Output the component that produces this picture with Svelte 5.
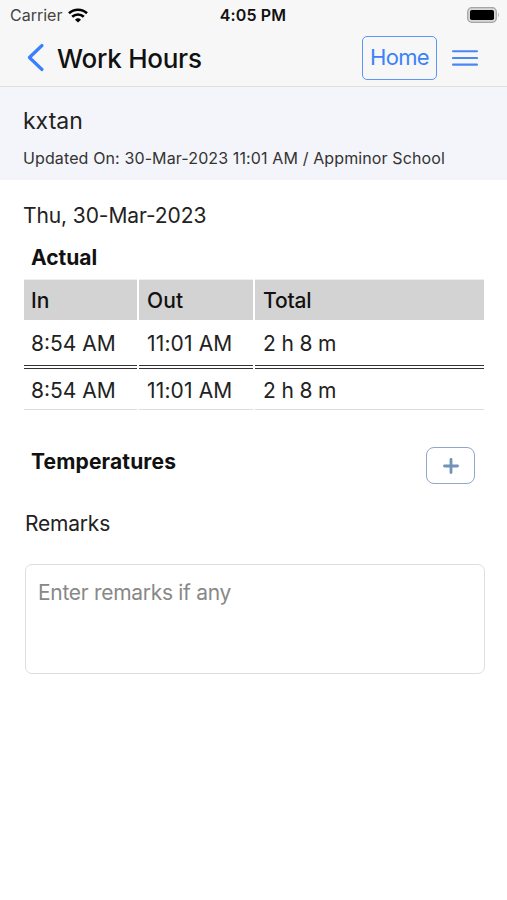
<script lang="ts">
    type Entry = { in: string; out: string; total: string };

    const staff = { name: 'kxtan', updated: '30-Mar-2023 11:01 AM', school: 'Appminor School' };
    const day = 'Thu, 30-Mar-2023';
    const entries: Entry[] = [{ in: '8:54 AM', out: '11:01 AM', total: '2 h 8 m' }];
    const sum: Entry = { in: '8:54 AM', out: '11:01 AM', total: '2 h 8 m' };

    let remarks = $state('');
</script>

<div class="page">
    <header>
        <div class="status">
            <div class="carrier">
                <span>Carrier</span>
                <svg width="20" height="15" viewBox="0 0 20 15" fill="none" stroke="#000" stroke-width="2.6">
                    <path d="M1 5.3a13 13 0 0 1 18 0" />
                    <path d="M4.2 8.8a8.4 8.4 0 0 1 11.6 0" />
                    <path d="M10 14.6 7 11.7a4.3 4.3 0 0 1 6 0z" fill="#000" stroke="none" />
                </svg>
            </div>
            <span class="time">4:05 PM</span>
            <svg class="battery" width="33" height="16" viewBox="0 0 33 16">
                <rect x=".7" y=".7" width="28.6" height="14.6" rx="4" fill="#d8d8d8" stroke="#a5a5a5" stroke-width="1.3" />
                <rect x="3" y="3" width="24" height="10" rx="1.8" fill="#000" />
                <path d="M31 5.5q1.8 2.5 0 5z" fill="#a5a5a5" />
            </svg>
        </div>
        <nav>
            <button class="icon" aria-label="Back">
                <svg width="18" height="30" viewBox="0 0 18 30" fill="none" stroke="#3880ff" stroke-width="3.2" stroke-linecap="round" stroke-linejoin="round">
                    <path d="M15 2.5 2.4 14.5 15 26.5" />
                </svg>
            </button>
            <h1>Work Hours</h1>
            <button class="home">Home</button>
            <button class="icon" aria-label="Menu">
                <svg width="26" height="18" viewBox="0 0 26 18" stroke="#4a88f5" stroke-width="2.1" stroke-linecap="round">
                    <path d="M1 2.2h24M1 9h24M1 15.6h24" />
                </svg>
            </button>
        </nav>
    </header>

    <section class="profile">
        <h2>{staff.name}</h2>
        <p>Updated On: {staff.updated} / {staff.school}</p>
    </section>

    <main>
        <div class="day">{day}</div>
        <h3>Actual</h3>
        <div class="table">
            <div class="row head"><span>In</span><span>Out</span><span>Total</span></div>
            {#each entries as e}
                <div class="row"><span>{e.in}</span><span>{e.out}</span><span>{e.total}</span></div>
            {/each}
            <div class="row sum"><span>{sum.in}</span><span>{sum.out}</span><span>{sum.total}</span></div>
        </div>

        <div class="temps">
            <h3>Temperatures</h3>
            <button class="add" aria-label="Add temperature">
                <svg width="16" height="16" viewBox="0 0 16 16" stroke="#7290b8" stroke-width="2.8" stroke-linecap="round">
                    <path d="M8 1.5v13M1.5 8h13" />
                </svg>
            </button>
        </div>

        <label for="remarks">Remarks</label>
        <textarea id="remarks" placeholder="Enter remarks if any" bind:value={remarks}></textarea>
    </main>
</div>

<style>
    :global(body) { background: #fff; }
    .page { min-height: 900px; font-family: Inter, "Liberation Sans", sans-serif; color: #222; font-size: 21px; }
    .page * { box-sizing: border-box; }
    h1, h2, h3, p { margin: 0; }
    button { font: inherit; background: none; padding: 0; cursor: pointer; }

    header { height: 87px; background: #f7f7f7; border-bottom: 1px solid #dfe0e3; }
    .status { height: 30px; display: grid; grid-template-columns: 1fr auto 1fr; align-items: center; padding: 0 8px 0 10px; }
    .carrier { display: flex; align-items: center; gap: 6px; font-size: 16px; color: #444; }
    .time { margin-right: 3px; font-size: 16px; font-weight: 600; letter-spacing: .15px; color: #111; }
    .battery { justify-self: end; margin-right: -1px; }
    nav { height: 56px; display: flex; align-items: center; padding: 0 29px 0 27px; }
    .icon { display: flex; border: 0; }
    h1 { flex: 1; margin-left: 12px; font-size: 26px; font-weight: 500; letter-spacing: -.25px; color: #111; }
    .home { width: 75px; height: 44px; margin-right: 15px; padding-bottom: 2px; border: 1.5px solid #5b95f8; border-radius: 5px; color: #3d82f8; font-size: 22px; letter-spacing: -.7px; }

    .profile { height: 93px; padding: 19px 23px 0; background: #f4f5fa; }
    h2 { font-size: 23px; line-height: 30px; font-weight: 400; }
    .profile p { margin-top: 11px; font-size: 16px; line-height: 22px; letter-spacing: .12px; color: #333; white-space: nowrap; }

    main { padding: 22px 22px 0 24px; }
    .day { line-height: 28px; margin-left: -1px; letter-spacing: -.1px; }
    h3 { padding-left: 7px; font-size: 21px; line-height: 28px; font-weight: 700; color: #111; }
    .day + h3 { margin-top: 14px; }
    .table { margin: 7px 0 0; }
    .row { display: grid; grid-template-columns: 113px 114px 229px; gap: 2px; }
    .row span { height: 45px; padding: 0 7px; line-height: 48px; }
    .row span + span { padding-left: 8px; }
    .row span:nth-child(2) { letter-spacing: .15px; }
    .head span { height: 41px; line-height: 42px; background: #d3d3d3; border-top: 1px solid #eee; font-weight: 450; color: #111; }
    .row span:last-child { letter-spacing: -.15px; }
    .sum span { border-top: 4px double #333; border-bottom: 1px solid #ddd; line-height: 43px; }

    .temps { display: flex; justify-content: space-between; margin-top: 37px; padding-right: 10px; }
    .temps h3 { padding-top: 1px; letter-spacing: .15px; }
    .add { display: grid; place-items: center; width: 49px; height: 37px; border: 1.5px solid #8fa8c6; border-radius: 8px; }
    label { display: block; margin: 26px 0 0 1px; line-height: 28px; letter-spacing: -.2px; }
    textarea { display: block; width: 460px; height: 110px; margin: 26px 0 0 1px; padding: 14px 12px; border: 1.5px solid #dedede; border-radius: 7px; font: inherit; line-height: 28px; letter-spacing: -.3px; resize: none; outline: 0; }
    textarea::placeholder { color: #888; opacity: 1; }
</style>
